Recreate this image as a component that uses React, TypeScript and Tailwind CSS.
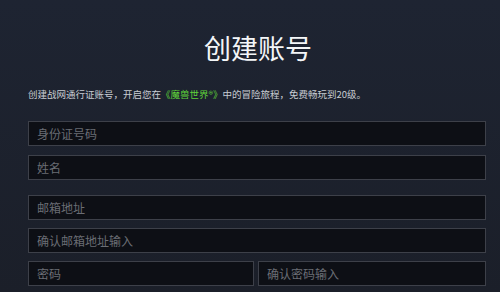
const fieldCls =
  'h-[25px] min-w-0 bg-[#0d0f15] border border-[#3d4049] px-2 text-[12px] text-[#c8cad0] placeholder:text-[#6a6d74] outline-none';

export default function App() {
  return (
    <div
      className="w-[500px] h-[292px] overflow-hidden bg-gradient-to-b from-[#1e2432] to-[#1b1f29] text-white"
      style={{ fontFamily: '"Noto Sans CJK SC", "Noto Sans", sans-serif' }}
    >
      <div className="pt-[29px] pl-[16px] text-center text-[27px] leading-[38px] text-[#f4f6f8]">创建账号</div>

      <div className="mt-[19px] pl-[28px] text-[9.5px] leading-[16px] text-[#c9cdd4]">
        创建战网通行证账号，开启您在<span className="text-[#5fd13a]">《魔兽世界®》</span>中的冒险旅程，免费畅玩到20级。
      </div>

      <div className="mt-[19px] pl-[28px] pr-[14px] flex flex-col">
        <input className={`${fieldCls} w-full`} placeholder="身份证号码" />
        <input className={`${fieldCls} w-full mt-[9px] border-[#2c3d52]`} placeholder="姓名" />
        <input className={`${fieldCls} w-full mt-[15px]`} placeholder="邮箱地址" />
        <input className={`${fieldCls} w-full mt-[8px]`} placeholder="确认邮箱地址输入" />
        <div className="mt-[8px] flex gap-[4px]">
          <input className={`${fieldCls} w-[226px] flex-none`} placeholder="密码" />
          <input className={`${fieldCls} flex-1`} placeholder="确认密码输入" />
        </div>
      </div>
    </div>
  );
}
